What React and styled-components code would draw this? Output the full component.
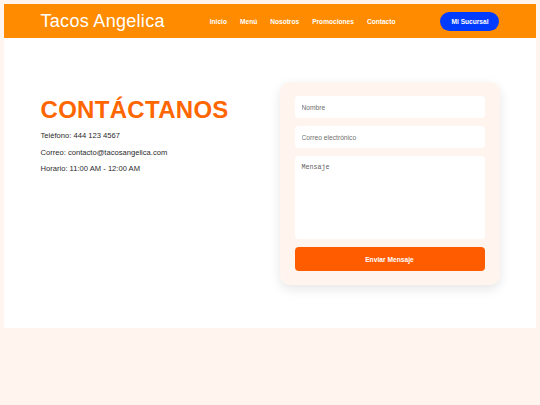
import React from "react";
import styled, { createGlobalStyle } from "styled-components";

const Global = createGlobalStyle`
  html, body { margin: 0; padding: 0; }
  body {
    background: #fff5ee;
    padding: 4px;
    font-family: "Liberation Sans", Arial, sans-serif;
  }
  * { box-sizing: border-box; }
`;

const Header = styled.header`
  background: #ff8c00;
  height: 34px;
  display: flex;
  align-items: center;
`;

const Container = styled.div`
  width: 459px;
  margin: 0 auto;
  display: flex;
  align-items: ${(p) => p.$align || "center"};
  justify-content: space-between;
`;

const Brand = styled.div`
  color: #ffffff;
  font-size: 18px;
  line-height: 20px;
  letter-spacing: 0.3px;
`;

const Nav = styled.nav`
  display: flex;
  gap: 13px;
`;

const NavLink = styled.a`
  color: #ffffff;
  font-size: 6.6px;
  font-weight: 700;
  text-decoration: none;
`;

const BranchButton = styled.button`
  background: #003cff;
  color: #ffffff;
  border: none;
  border-radius: 10px;
  height: 19px;
  padding: 0 11px;
  font-family: inherit;
  font-size: 6.6px;
  font-weight: 700;
`;

const Main = styled.main`
  background: #ffffff;
  padding: 44px 0 43px;
`;

const Info = styled.div`
  padding-top: 14px;
`;

const Title = styled.h2`
  margin: 0 0 4px;
  color: #ff6600;
  font-size: 24px;
  line-height: 28px;
  font-weight: 700;
  letter-spacing: 0.3px;
`;

const Line = styled.p`
  margin: 0;
  color: #2a2a2a;
  font-size: 7.6px;
  line-height: 16.5px;
`;

const Card = styled.form`
  width: 220px;
  background: #fff5ee;
  border-radius: 10px;
  padding: 14px 15px;
  display: flex;
  flex-direction: column;
  gap: 8px;
  box-shadow: 0 4px 12px rgba(0, 0, 0, 0.1);
`;

const Field = styled.input`
  height: 22px;
  border: none;
  border-radius: 4px;
  background: #ffffff;
  padding: 0 7px;
  font-family: "Liberation Sans", Arial, sans-serif;
  font-size: 6.7px;
  outline: none;
  &::placeholder { color: #6f6f6f; }
`;

const Area = styled.textarea`
  height: 83px;
  border: none;
  border-radius: 4px;
  background: #ffffff;
  padding: 7px;
  font-family: "Liberation Mono", "DejaVu Sans Mono", monospace;
  font-size: 6.7px;
  resize: none;
  outline: none;
  &::placeholder { color: #5f5f5f; }
`;

const Submit = styled.button`
  height: 24px;
  border: none;
  border-radius: 4px;
  background: #ff5c00;
  color: #ffffff;
  font-family: "Liberation Sans", Arial, sans-serif;
  font-size: 6.7px;
  font-weight: 700;
`;

export default function App() {
  return (
    <>
      <Global />
      <Header>
        <Container>
          <Brand>Tacos Angelica</Brand>
          <Nav>
            <NavLink href="#">Inicio</NavLink>
            <NavLink href="#">Menú</NavLink>
            <NavLink href="#">Nosotros</NavLink>
            <NavLink href="#">Promociones</NavLink>
            <NavLink href="#">Contacto</NavLink>
          </Nav>
          <BranchButton>Mi Sucursal</BranchButton>
        </Container>
      </Header>
      <Main>
        <Container $align="flex-start">
          <Info>
            <Title>CONTÁCTANOS</Title>
            <Line>Teléfono: 444 123 4567</Line>
            <Line>Correo: contacto@tacosangelica.com</Line>
            <Line>Horario: 11:00 AM - 12:00 AM</Line>
          </Info>
          <Card onSubmit={(e) => e.preventDefault()}>
            <Field placeholder="Nombre" />
            <Field placeholder="Correo electrónico" />
            <Area placeholder="Mensaje" />
            <Submit type="submit">Enviar Mensaje</Submit>
          </Card>
        </Container>
      </Main>
    </>
  );
}
